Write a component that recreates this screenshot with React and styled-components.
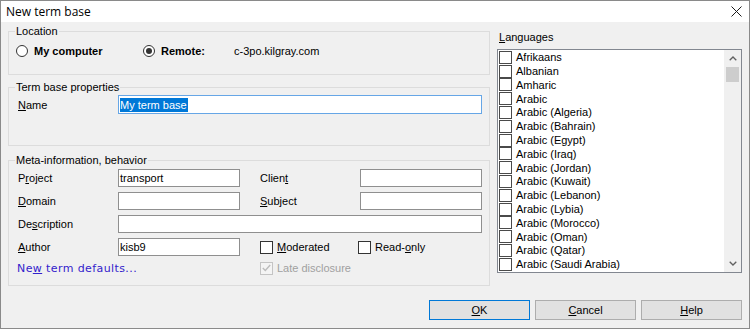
import React from "react";
import styled, { createGlobalStyle } from "styled-components";

const GlobalStyle = createGlobalStyle`
  html, body {
    margin: 0;
    padding: 0;
    background: #f0f0f0;
  }
  body {
    font-family: "Liberation Sans", Arial, sans-serif;
    font-size: 11px;
    color: #000;
  }
`;

const languages = [
  "Afrikaans",
  "Albanian",
  "Amharic",
  "Arabic",
  "Arabic (Algeria)",
  "Arabic (Bahrain)",
  "Arabic (Egypt)",
  "Arabic (Iraq)",
  "Arabic (Jordan)",
  "Arabic (Kuwait)",
  "Arabic (Lebanon)",
  "Arabic (Lybia)",
  "Arabic (Morocco)",
  "Arabic (Oman)",
  "Arabic (Qatar)",
  "Arabic (Saudi Arabia)",
];

const App = () => {
  return (
    <>
      <GlobalStyle />
      <Window>
        {/* Title bar */}
        <TitleBar>
          <span>New term base</span>
          <CloseIcon width="11" height="11" viewBox="0 0 11 11">
            <path d="M0.5 0.5 L10.5 10.5 M10.5 0.5 L0.5 10.5" stroke="#1a1a1a" strokeWidth="1" />
          </CloseIcon>
        </TitleBar>

        <Body>
          <Main>
            <LeftCol>
              {/* Location */}
              <Group $h={50} $pt={6}>
                <Legend>Location</Legend>
                <RadioRow>
                  <RadioOption $w={127}>
                    <Radio />
                    My computer
                  </RadioOption>
                  <RadioOption $w={91}>
                    <Radio $checked />
                    Remote:
                  </RadioOption>
                  <span>c-3po.kilgray.com</span>
                </RadioRow>
              </Group>

              {/* Term base properties */}
              <Group $h={65} $pt={1} $gap={6}>
                <Legend>Term base properties</Legend>
                <FieldRow>
                  <Label>
                    <u>N</u>ame
                  </Label>
                  <TextBox $w={364} $h={19} $focused>
                    <Selected>My term base</Selected>
                  </TextBox>
                </FieldRow>
              </Group>

              {/* Meta-information */}
              <Group $h={132} $pt={2} $gap={8}>
                <Legend>Meta-information, behavior</Legend>
                <MetaGrid>
                  <Label>
                    P<u>r</u>oject
                  </Label>
                  <TextBox>transport</TextBox>
                  <Label $col={4}>
                    Clien<u>t</u>
                  </Label>
                  <TextBox>{""}</TextBox>

                  <Label>
                    <u>D</u>omain
                  </Label>
                  <TextBox>{""}</TextBox>
                  <Label $col={4}>
                    <u>S</u>ubject
                  </Label>
                  <TextBox>{""}</TextBox>

                  <Label>
                    De<u>s</u>cription
                  </Label>
                  <TextBox $span>{""}</TextBox>

                  <Label>
                    <u>A</u>uthor
                  </Label>
                  <TextBox>kisb9</TextBox>
                  <Check $col={4}>
                    <Box />
                    <span>
                      <u>M</u>oderated
                    </span>
                  </Check>
                  <Check $shift={-2}>
                    <Box />
                    <span>
                      Read-<u>o</u>nly
                    </span>
                  </Check>

                  <Link>
                    Ne<u>w</u> term defaults...
                  </Link>
                  <Check $col={4} $disabled>
                    <Box $disabled>
                      <svg width="9" height="8" viewBox="0 0 9 8">
                        <path d="M0.8 4 L3.3 6.5 L8.2 1" fill="none" stroke="#bcbcbc" strokeWidth="1.4" />
                      </svg>
                    </Box>
                    <span>Late disclosure</span>
                  </Check>
                </MetaGrid>
              </Group>
            </LeftCol>

            {/* Languages */}
            <RightCol>
              <ListTitle>
                <u>L</u>anguages
              </ListTitle>
              <ListBox>
                <ListItems>
                  {languages.map((lang) => (
                    <ListItem key={lang}>
                      <Box $list />
                      <span>{lang}</span>
                    </ListItem>
                  ))}
                </ListItems>
                <ScrollBar>
                  <ScrollArrow>
                    <svg width="8" height="5" viewBox="0 0 8 5">
                      <path d="M0.7 4.3 L4 1 L7.3 4.3" fill="none" stroke="#606060" strokeWidth="1.3" />
                    </svg>
                  </ScrollArrow>
                  <ScrollTrack>
                    <Thumb />
                  </ScrollTrack>
                  <ScrollArrow>
                    <svg width="8" height="5" viewBox="0 0 8 5">
                      <path d="M0.7 0.7 L4 4 L7.3 0.7" fill="none" stroke="#606060" strokeWidth="1.3" />
                    </svg>
                  </ScrollArrow>
                </ScrollBar>
              </ListBox>
            </RightCol>
          </Main>

          {/* Dialog buttons */}
          <Footer>
            <Button $default>
              <u>O</u>K
            </Button>
            <Button>
              <u>C</u>ancel
            </Button>
            <Button>
              <u>H</u>elp
            </Button>
          </Footer>
        </Body>
      </Window>
    </>
  );
};

const Window = styled.div`
  width: 750px;
  height: 329px;
  box-sizing: border-box;
  border: 1px solid #8a8a8a;
  background: #f0f0f0;
  display: flex;
  flex-direction: column;
`;

const TitleBar = styled.div`
  height: 21px;
  flex-shrink: 0;
  background: #ffffff;
  display: flex;
  align-items: center;
  justify-content: space-between;
  padding: 0 7px 0 5px;
  font-family: "Open Sans", "Noto Sans", sans-serif;
  font-size: 12px;
  color: #000;
`;

const CloseIcon = styled.svg`
  display: block;
`;

const Body = styled.div`
  flex: 1;
  display: flex;
  flex-direction: column;
  padding: 0 7px 8px 7px;
`;

const Main = styled.div`
  display: flex;
  gap: 7px;
`;

const LeftCol = styled.div`
  width: 482px;
  display: flex;
  flex-direction: column;
  padding-top: 3px;
`;

const Group = styled.fieldset`
  margin: ${(p) => p.$gap || 0}px 0 0 0;
  padding: ${(p) => p.$pt}px 0 0 0;
  border: 1px solid #dcdcdc;
  height: ${(p) => p.$h}px;
  box-sizing: border-box;
  min-width: 0;
`;

const Legend = styled.legend`
  margin-left: 6px;
  padding: 0 1px;
  line-height: 13px;
  font-size: 11px;
  color: #000;
`;

const RadioRow = styled.div`
  display: flex;
  align-items: center;
  height: 14px;
  margin-left: 7px;
`;

const RadioOption = styled.label`
  display: flex;
  align-items: center;
  gap: 6px;
  width: ${(p) => p.$w}px;
  font-weight: bold;
`;

const Radio = styled.span`
  width: 12px;
  height: 12px;
  box-sizing: border-box;
  border-radius: 50%;
  border: 1px solid #333;
  background: #fff;
  display: flex;
  align-items: center;
  justify-content: center;

  &::after {
    content: "";
    width: 6px;
    height: 6px;
    border-radius: 50%;
    background: ${(p) => (p.$checked ? "#333" : "transparent")};
  }
`;

const FieldRow = styled.div`
  display: flex;
  align-items: center;
  margin-left: 9px;
`;

const Label = styled.span`
  width: 100px;
  flex-shrink: 0;
  grid-column: ${(p) => p.$col || "auto"};
`;

const TextBox = styled.div`
  width: ${(p) => (p.$w ? `${p.$w}px` : "auto")};
  height: ${(p) => p.$h || 18}px;
  box-sizing: border-box;
  border: 1px solid ${(p) => (p.$focused ? "#66a6e6" : "#8f8f8f")};
  background: #fff;
  padding-left: 1px;
  display: flex;
  align-items: center;
  grid-column: ${(p) => (p.$span ? "2 / 6" : "auto")};
  white-space: nowrap;
`;

const Selected = styled.span`
  background: #0078d7;
  color: #fff;
  line-height: 14px;
  padding: 0 1px 0 0;
`;

const MetaGrid = styled.div`
  display: grid;
  grid-template-columns: 100px 122px 20px 100px 122px;
  grid-template-rows: repeat(4, 18px) 14px;
  row-gap: 5px;
  align-items: center;
  margin-left: 9px;
`;

const Check = styled.label`
  display: flex;
  align-items: center;
  gap: 4px;
  grid-column: ${(p) => p.$col || "auto"};
  margin-left: ${(p) => p.$shift || 0}px;
  color: ${(p) => (p.$disabled ? "#a0a0a0" : "#000")};
`;

const Box = styled.span`
  width: 13px;
  height: 13px;
  box-sizing: border-box;
  border: 1px solid ${(p) => (p.$disabled ? "#c4c4c4" : p.$list ? "#4a4a4a" : "#333")};
  background: ${(p) => (p.$disabled ? "#f4f4f4" : "#fff")};
  display: flex;
  align-items: center;
  justify-content: center;
  flex-shrink: 0;
`;

const Link = styled.span`
  grid-column: 1 / 3;
  margin-left: -1px;
  font-family: "DejaVu Sans", Verdana, sans-serif;
  font-size: 11px;
  letter-spacing: 0.4px;
  color: #3322cc;
`;

const RightCol = styled.div`
  width: 245px;
  display: flex;
  flex-direction: column;
  padding-top: 9px;
`;

const ListTitle = styled.div`
  line-height: 13px;
  padding-left: 2px;
  margin-bottom: 5px;
`;

const ListBox = styled.div`
  height: 224px;
  box-sizing: border-box;
  border: 1px solid #828790;
  background: #fff;
  display: flex;
`;

const ListItems = styled.div`
  flex: 1;
  display: flex;
  flex-direction: column;
  padding-top: 0.4px;
`;

const ListItem = styled.div`
  height: 13.8px;
  display: flex;
  align-items: center;
  gap: 4px;
  padding-left: 1px;
  white-space: nowrap;
`;

const ScrollBar = styled.div`
  width: 17px;
  background: #f0f0f0;
  display: flex;
  flex-direction: column;
`;

const ScrollArrow = styled.div`
  height: 17px;
  display: flex;
  align-items: center;
  justify-content: center;
`;

const ScrollTrack = styled.div`
  flex: 1;
  display: flex;
  flex-direction: column;
  padding: 0 2px;
`;

const Thumb = styled.div`
  height: 15px;
  background: #cdcdcd;
`;

const Footer = styled.div`
  margin-top: auto;
  display: flex;
  justify-content: flex-end;
  gap: 5px;
`;

const Button = styled.button`
  width: 101px;
  height: 20px;
  box-sizing: border-box;
  padding: 0;
  font-family: "Liberation Sans", Arial, sans-serif;
  font-size: 11px;
  color: #000;
  background: #e1e1e1;
  border: 1px solid ${(p) => (p.$default ? "#0078d7" : "#adadad")};
  border-radius: 0;
`;

export default App;
